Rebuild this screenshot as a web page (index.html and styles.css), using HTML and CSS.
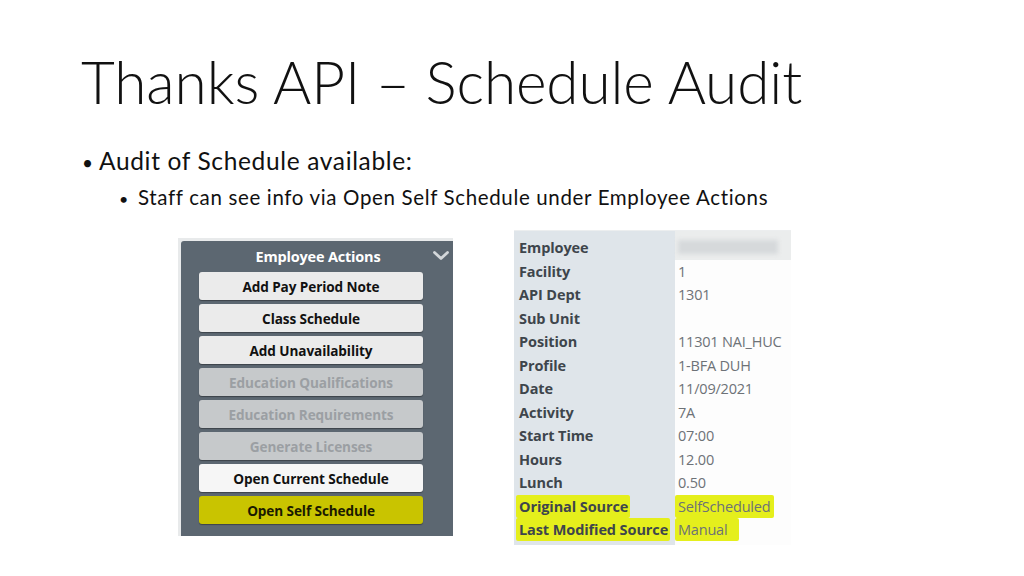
FILE: index.html
```html
<!DOCTYPE html>
<html lang="en">
<head>
  <meta charset="UTF-8">
  <title>Thanks API – Schedule Audit</title>
  <link rel="stylesheet" href="styles.css">
</head>
<body>
  <div class="slide">
    <h1 class="title">Thanks API – Schedule Audit</h1>

    <ul class="points">
      <li>Audit of Schedule available:
        <ul class="sub">
          <li>Staff can see info via Open Self Schedule under Employee Actions</li>
        </ul>
      </li>
    </ul>

    <div class="shots">
      <div class="actions-shot">
        <div class="actions">
          <div class="actions-head">
            <span>Employee Actions</span>
            <svg class="chev" width="18" height="11" viewBox="0 0 18 11">
              <path d="M2.5 2.5 L9 8.5 L15.5 2.5" fill="none" stroke="#d3d7da" stroke-width="2.8" stroke-linecap="round" stroke-linejoin="round"/>
            </svg>
          </div>
          <div class="btn">Add Pay Period Note</div>
          <div class="btn">Class Schedule</div>
          <div class="btn">Add Unavailability</div>
          <div class="btn off">Education Qualifications</div>
          <div class="btn off">Education Requirements</div>
          <div class="btn off">Generate Licenses</div>
          <div class="btn bright">Open Current Schedule</div>
          <div class="btn marked">Open Self Schedule</div>
        </div>
      </div>

      <div class="detail-shot">
        <div class="row first"><div class="lbl">Employee</div><div class="val"><span class="blur"></span></div></div>
        <div class="row"><div class="lbl">Facility</div><div class="val">1</div></div>
        <div class="row"><div class="lbl">API Dept</div><div class="val">1301</div></div>
        <div class="row"><div class="lbl">Sub Unit</div><div class="val"></div></div>
        <div class="row"><div class="lbl">Position</div><div class="val">11301 NAI_HUC</div></div>
        <div class="row"><div class="lbl">Profile</div><div class="val">1-BFA DUH</div></div>
        <div class="row"><div class="lbl">Date</div><div class="val">11/09/2021</div></div>
        <div class="row"><div class="lbl">Activity</div><div class="val">7A</div></div>
        <div class="row"><div class="lbl">Start Time</div><div class="val">07:00</div></div>
        <div class="row"><div class="lbl">Hours</div><div class="val">12.00</div></div>
        <div class="row"><div class="lbl">Lunch</div><div class="val">0.50</div></div>
        <div class="row"><div class="lbl"><span class="hl hl-a">Original Source</span></div><div class="val"><span class="hl hl-b">SelfScheduled</span></div></div>
        <div class="row"><div class="lbl"><span class="hl hl-c">Last Modified Source</span></div><div class="val"><span class="hl hl-d">Manual</span></div></div>
      </div>
    </div>
  </div>
</body>
</html>
```

FILE: styles.css
```css
body {
  margin: 0;
  background: white;
}

.slide {
  width: 1024px;
  height: 576px;
  background: white;
  color: #111;
  font-family: Lato, "Open Sans", sans-serif;
  overflow: hidden;
}

.title {
  margin: 0;
  padding: 45px 0 0 81px;
  font-weight: 300;
  font-size: 58.5px;
  line-height: 72px;
  letter-spacing: -0.1px;
}

.points {
  list-style: none;
  margin: 0;
  padding: 27px 0 0 82px;
  font-size: 24.5px;
  line-height: 34px;
  letter-spacing: 0.65px;
}

.points > li::before {
  content: "•";
  display: inline-block;
  width: 17px;
  font-size: 19px;
}

.sub {
  list-style: none;
  margin: 0;
  padding: 0 0 0 37px;
  font-size: 20.5px;
  line-height: 34px;
  letter-spacing: 0.65px;
}

.sub li::before {
  content: "•";
  display: inline-block;
  width: 19px;
  font-size: 16px;
}

.shots {
  display: flex;
  align-items: flex-start;
  gap: 61px;
  margin: 14px 0 0 178px;
}

/* left screenshot */
.actions-shot {
  width: 272px;
  height: 295px;
  padding: 3px 0 0 3px;
  margin-top: 8px;
  background: #e8eaeb;
}

.actions {
  height: 295px;
  background: #5c6771;
  border-radius: 3px 0 0 0;
  padding: 0 0 0 18px;
  box-sizing: border-box;
  font-family: "Open Sans", sans-serif;
}

.actions-head {
  position: relative;
  height: 31px;
  width: 224px;
  display: flex;
  align-items: center;
  justify-content: center;
  color: white;
  font-weight: 700;
  font-size: 14.5px;
  letter-spacing: -0.2px;
  padding-left: 14px;
  box-sizing: border-box;
}

.chev {
  position: absolute;
  left: 233px;
  top: 9px;
}

.btn {
  width: 224px;
  height: 28px;
  margin-bottom: 4px;
  background: #ebebeb;
  border-radius: 3px;
  box-shadow: 0 1px 1px rgba(0,0,0,0.35);
  display: flex;
  align-items: center;
  justify-content: center;
  color: #111;
  font-weight: 700;
  font-size: 13.6px;
  letter-spacing: -0.1px;
}

.btn.off {
  background: #c6c9cb;
  color: #9b9fa3;
}

.btn.bright {
  background: #f6f6f6;
}

.btn.marked {
  background: #c9c400;
  color: #1a1a00;
}

/* right screenshot */
.detail-shot {
  width: 277px;
  height: 315px;
  padding-top: 5px;
  box-sizing: border-box;
  background: linear-gradient(to right, #dfe5ea 0, #dfe5ea 161px, #fdfdfd 161px);
  border-top: 1px solid #eceeef;
  font-family: "Open Sans", sans-serif;
  font-size: 14.5px;
}

.row {
  display: flex;
  height: 23.5px;
  align-items: center;
}

.lbl {
  width: 161px;
  padding-left: 5px;
  box-sizing: border-box;
  font-weight: 700;
  color: #3e454c;
  letter-spacing: -0.1px;
}

.val {
  padding-left: 3px;
  color: #6d7277;
  letter-spacing: -0.2px;
}

.row.first .val {
  align-self: stretch;
  width: 116px;
  background: #ebeded;
  margin-top: -5px;
  padding-top: 9px;
  box-sizing: border-box;
}

.blur {
  display: block;
  width: 100px;
  height: 14px;
  background: #d6d9db;
  filter: blur(2px);
}

.hl {
  background: #e5ef1c;
  padding: 2px 2px 2px 3px;
  margin-left: -3px;
  border-radius: 2px;
}

.hl-c {
  padding-right: 2px;
}

.hl-b {
  padding-right: 4px;
}

.hl-d {
  padding-right: 12px;
}
```
